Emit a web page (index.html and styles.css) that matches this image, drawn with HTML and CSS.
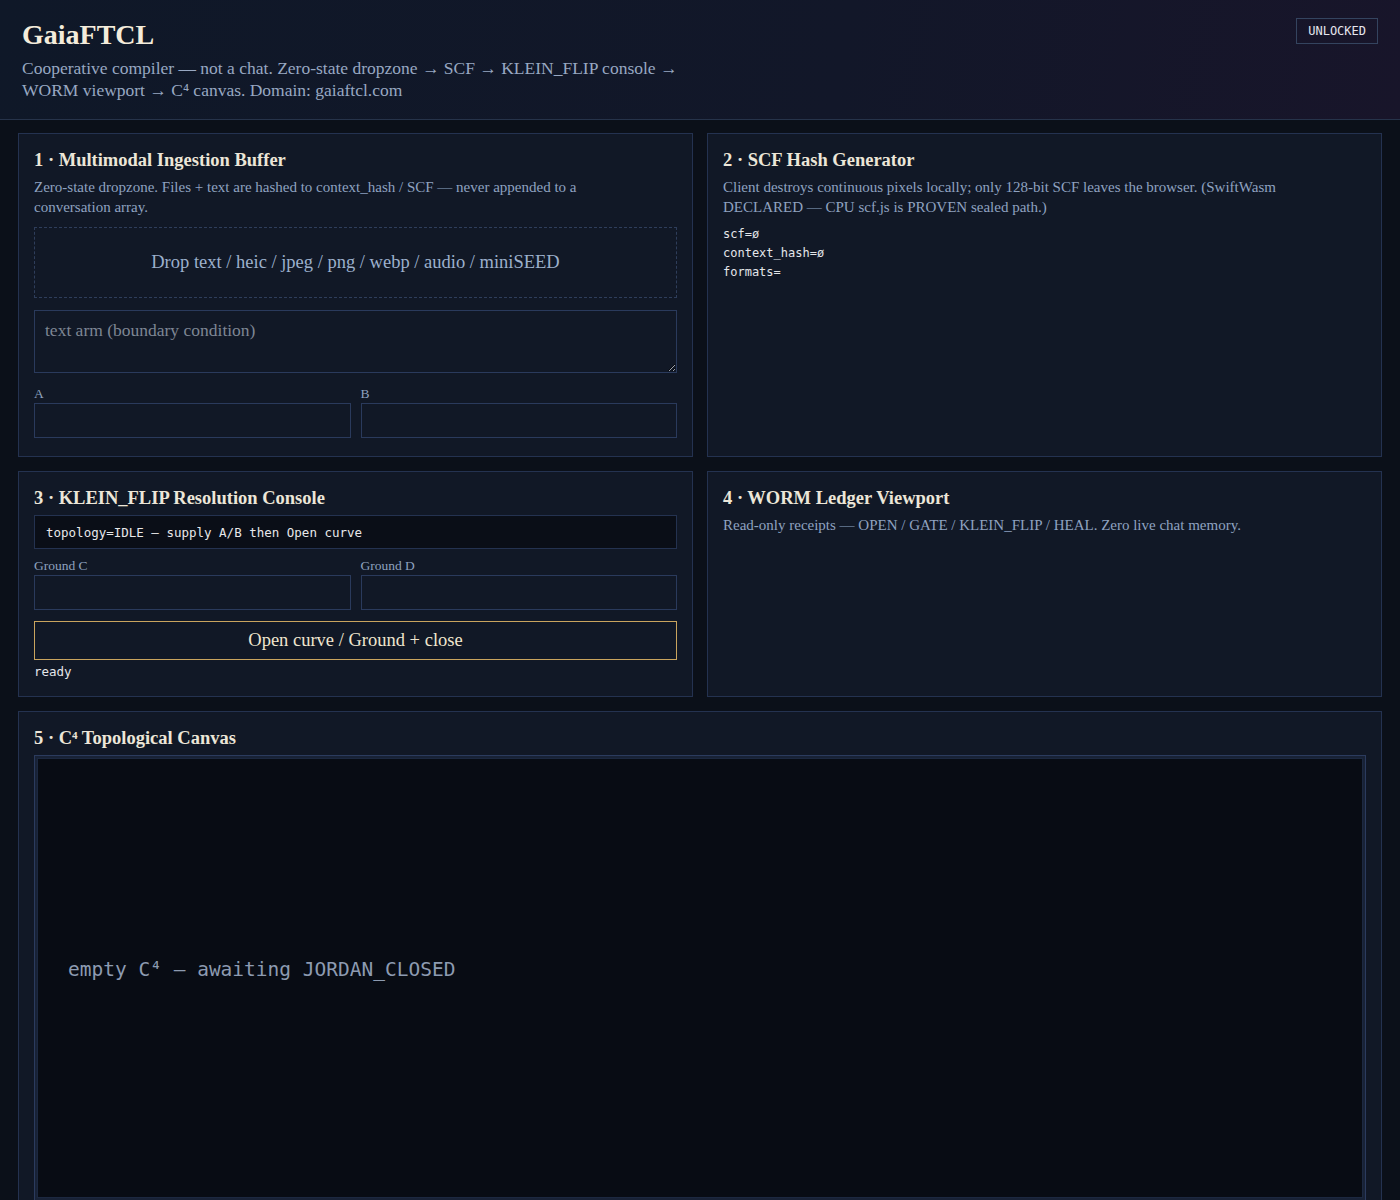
FILE: index.html
```html
<!DOCTYPE html>
<html lang="en">
<head>
    <meta charset="UTF-8">
    <meta name="viewport" content="width=device-width, initial-scale=1.0">
    <title>GaiaFTCL</title>
    <link rel="stylesheet" href="styles.css">
</head>
<body>

    <div class="topbar">
        <div class="brand">
            <h1>GaiaFTCL</h1>
            <p class="lede">Cooperative compiler — not a chat. Zero-state dropzone → SCF → KLEIN_FLIP console → WORM viewport → C⁴ canvas. Domain: gaiaftcl.com</p>
        </div>
        <span class="badge">UNLOCKED</span>
    </div>

    <div class="grid">
        <section class="panel">
            <h2>1 · Multimodal Ingestion Buffer</h2>
            <p class="hint">Zero-state dropzone. Files + text are hashed to context_hash / SCF — never appended to a conversation array.</p>
            <div class="dropzone">Drop text / heic / jpeg / png / webp / audio / miniSEED</div>
            <textarea class="arm" placeholder="text arm (boundary condition)"></textarea>
            <div class="pair arms">
                <div class="field">
                    <label for="armA">A</label>
                    <input type="text" id="armA">
                </div>
                <div class="field">
                    <label for="armB">B</label>
                    <input type="text" id="armB">
                </div>
            </div>
        </section>

        <section class="panel">
            <h2>2 · SCF Hash Generator</h2>
            <p class="hint">Client destroys continuous pixels locally; only 128-bit SCF leaves the browser. (SwiftWasm DECLARED — CPU scf.js is PROVEN sealed path.)</p>
            <pre class="readout">scf=ø
context_hash=ø
formats=</pre>
        </section>

        <section class="panel">
            <h2>3 · KLEIN_FLIP Resolution Console</h2>
            <div class="console">topology=IDLE — supply A/B then Open curve</div>
            <div class="pair">
                <div class="field">
                    <label for="groundC">Ground C</label>
                    <input type="text" id="groundC">
                </div>
                <div class="field">
                    <label for="groundD">Ground D</label>
                    <input type="text" id="groundD">
                </div>
            </div>
            <button class="btn-curve">Open curve / Ground + close</button>
            <div class="status">ready</div>
        </section>

        <section class="panel">
            <h2>4 · WORM Ledger Viewport</h2>
            <p class="hint">Read-only receipts — OPEN / GATE / KLEIN_FLIP / HEAL. Zero live chat memory.</p>
        </section>

        <section class="panel wide">
            <h2>5 · C⁴ Topological Canvas</h2>
            <div class="canvas-frame">
                <div class="canvas">empty C⁴ — awaiting JORDAN_CLOSED</div>
            </div>
        </section>
    </div>

</body>
</html>
```

FILE: styles.css
```css
body {
    margin: 0;
    background-color: #0b1019;
    color: #e6e1d6;
    font-family: "Liberation Serif", "Times New Roman", serif;
}
.topbar {
    display: flex;
    justify-content: space-between;
    align-items: flex-start;
    padding: 19px 22px 18px 22px;
    background: linear-gradient(100deg, #0f1828 0%, #121729 60%, #18152a 100%);
    border-bottom: 1px solid #26334a;
}
.topbar h1 {
    margin: 0;
    font-size: 28px;
    line-height: 32px;
    color: #f4ecdb;
    font-weight: bold;
}
.lede {
    margin: 6px 0 0;
    max-width: 665px;
    font-size: 17.5px;
    line-height: 22px;
    color: #98a8c2;
}
.badge {
    font-family: "DejaVu Sans Mono", monospace;
    font-size: 12px;
    color: #e6e6ee;
    border: 1px solid #34445f;
    padding: 4px 11px;
    line-height: 16px;
    margin-top: -1px;
}
.grid {
    display: grid;
    grid-template-columns: 1fr 1fr;
    gap: 14px;
    padding: 13px 18px 0;
}
.panel {
    background-color: #111826;
    border: 1px solid #243250;
    padding: 15px 15px 16px;
}
.panel.wide {
    grid-column: 1 / 3;
    padding-bottom: 15px;
}
.panel h2 {
    margin: 0 0 6px;
    font-size: 18.5px;
    line-height: 22px;
    color: #ece6d8;
}
.hint {
    margin: 0;
    max-width: 600px;
    font-size: 15px;
    line-height: 20px;
    color: #8fa2c0;
}
.dropzone {
    margin-top: 10px;
    height: 69px;
    border: 1px dashed #2e3d5a;
    display: flex;
    align-items: center;
    justify-content: center;
    font-size: 18.5px;
    color: #9cb0cc;
}
.arm {
    display: block;
    width: 100%;
    box-sizing: border-box;
    margin-top: 12px;
    height: 63px;
    padding: 9px 10px;
    background-color: #111826;
    border: 1px solid #2a3a5c;
    color: #d0d6e0;
    font-family: "Liberation Serif", serif;
    font-size: 17.5px;
    resize: vertical;
}
.arm::placeholder {
    color: #7e8694;
}
.pair {
    display: grid;
    grid-template-columns: 1fr 1fr;
    gap: 10px;
    margin-top: 9px;
}
.pair.arms {
    margin: 13px 0 2px;
}
.field label {
    display: block;
    font-size: 13.5px;
    line-height: 16px;
    color: #8ea1bf;
    margin-bottom: 1px;
}
.field input {
    display: block;
    width: 100%;
    box-sizing: border-box;
    height: 35px;
    background-color: #111826;
    border: 1px solid #2a3a5c;
    color: #d0d6e0;
}
.readout {
    margin: 8px 0 0;
    font-family: "DejaVu Sans Mono", monospace;
    font-size: 12px;
    line-height: 19px;
    color: #e4e6ea;
}
.console {
    margin-top: 4px;
    height: 34px;
    box-sizing: border-box;
    padding: 0 11px;
    display: flex;
    align-items: center;
    background-color: #0a0e17;
    border: 1px solid #243250;
    font-family: "DejaVu Sans Mono", monospace;
    font-size: 12.5px;
    color: #e8e8ea;
}
.btn-curve {
    display: block;
    width: 100%;
    margin-top: 11px;
    height: 39px;
    background-color: #111826;
    border: 1px solid #c9a45e;
    color: #f0e6cf;
    font-family: "Liberation Serif", serif;
    font-size: 18.5px;
    cursor: pointer;
}
.status {
    margin-top: 4px;
    font-family: "DejaVu Sans Mono", monospace;
    font-size: 12.5px;
    line-height: 16px;
    color: #e4e6ea;
}
.canvas-frame {
    margin-top: 5px;
    border: 1px solid #2b3b5e;
    padding: 2px;
    background-color: #182236;
}
.canvas {
    height: 440px;
    display: flex;
    align-items: center;
    padding: 0 0 18px 30px;
    box-sizing: border-box;
    background-color: #080c14;
    border: 1px solid #1c2840;
    font-family: "DejaVu Sans Mono", monospace;
    font-size: 19.5px;
    color: #8d9bb1;
}
```
